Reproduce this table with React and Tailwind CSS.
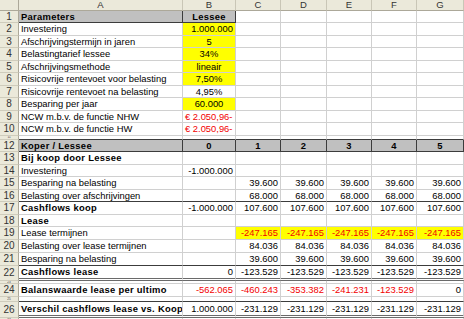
import React from 'react';

const COLS = ['A', 'B', 'C', 'D', 'E', 'F', 'G'];

const GB = 'border-b-[#d0d0d0]';
const GR = 'border-r-[#d0d0d0]';
const DB = 'border-b-[#3c3c3c]';
const DR = 'border-r-[#3c3c3c]';
const Y = 'bg-[#ffff00]';
const RED = 'text-[#f20000]';
const BOLD = 'font-bold tracking-[0.3px]';
const HEAD = 'bg-[#c0c0c0] font-bold tracking-[0.3px]';

// helpers for repeated value cells
const five = (t, extra = {}) => Array.from({ length: 5 }, () => ({ t, a: 'r', ...extra }));
const line = (cells, extra) => cells.map((c) => ({ ...(c || {}), ...extra }));

const ROWS = [
  {
    n: 1, h: 'h-[12px]',
    cells: [
      { t: 'Parameters', c: HEAD, bb: DB, br: DR },
      { t: 'Lessee', a: 'c', c: HEAD, bb: DB, br: DR },
    ],
  },
  { n: 2, h: 'h-[13px]', cells: [{ t: 'Investering' }, { t: '1.000.000', a: 'r', c: Y }] },
  { n: 3, h: 'h-[12px]', cells: [{ t: 'Afschrijvingstermijn in jaren' }, { t: '5', a: 'c', c: Y }] },
  { n: 4, h: 'h-[13px]', cells: [{ t: 'Belastingtarief lessee' }, { t: '34%', a: 'c', c: Y }] },
  { n: 5, h: 'h-[12px]', cells: [{ t: 'Afschrijvingsmethode' }, { t: 'lineair', a: 'c', c: Y }] },
  { n: 6, h: 'h-[13px]', cells: [{ t: 'Risicovrije rentevoet voor belasting' }, { t: '7,50%', a: 'c', c: Y }] },
  { n: 7, h: 'h-[12px]', cells: [{ t: 'Risicovrije rentevoet na belasting' }, { t: '4,95%', a: 'c' }] },
  { n: 8, h: 'h-[13px]', cells: [{ t: 'Besparing per jaar' }, { t: '60.000', a: 'c', c: Y }] },
  { n: 9, h: 'h-[12px]', cells: [{ t: 'NCW m.b.v. de functie NHW' }, { t: '€ 2.050,96-', c: RED }] },
  { n: 10, h: 'h-[13px]', cells: [{ t: 'NCW m.b.v. de functie HW' }, { t: '€ 2.050,96-', c: RED }] },
  { n: 11, h: 'h-[4px]', thin: true, cells: line(Array(7).fill(null), { bb: DB }) },
  {
    n: 12, h: 'h-[12px]',
    cells: line(
      [{ t: 'Koper / Lessee' }, { t: '0', a: 'c' }, { t: '1', a: 'c' }, { t: '2', a: 'c' }, { t: '3', a: 'c' }, { t: '4', a: 'c' }, { t: '5', a: 'c' }],
      { c: HEAD, bb: DB, br: DR }
    ),
  },
  { n: 13, h: 'h-[13px]', cells: [{ t: 'Bij koop door Lessee', c: BOLD }] },
  { n: 14, h: 'h-[12px]', cells: [{ t: 'Investering' }, { t: '-1.000.000', a: 'r' }] },
  { n: 15, h: 'h-[13px]', cells: [{ t: 'Besparing na belasting' }, {}, ...five('39.600')] },
  {
    n: 16, h: 'h-[12px]',
    cells: line([{ t: 'Belasting over afschrijvingen' }, {}, ...five('68.000')], { bb: DB }),
  },
  { n: 17, h: 'h-[13px]', cells: [{ t: 'Cashflows koop', c: BOLD }, { t: '-1.000.000', a: 'r' }, ...five('107.600')] },
  { n: 18, h: 'h-[12px]', cells: [{ t: 'Lease', c: BOLD }] },
  { n: 19, h: 'h-[13px]', cells: [{ t: 'Lease termijnen' }, {}, ...five('-247.165', { c: `${Y} ${RED}` })] },
  { n: 20, h: 'h-[13px]', cells: [{ t: 'Belasting over lease termijnen' }, {}, ...five('84.036')] },
  {
    n: 21, h: 'h-[13px]',
    cells: line([{ t: 'Besparing na belasting' }, {}, ...five('39.600')], { bb: DB }),
  },
  {
    n: 22, h: 'h-[15px]',
    cells: line(
      [{ t: 'Cashflows lease', c: BOLD }, { t: '0', a: 'r' }, ...five('-123.529')],
      { bw: 'border-b-[3px]', bb: 'border-b-[#6a6a6a] border-double' }
    ),
  },
  { n: 23, h: 'h-[3px]', thin: true, cells: [] },
  {
    n: 24, h: 'h-[13px]',
    cells: [
      { t: 'Balanswaarde lease per ultimo', c: BOLD },
      { t: '-562.065', a: 'r', c: RED },
      { t: '-460.243', a: 'r', c: RED },
      { t: '-353.382', a: 'r', c: RED },
      { t: '-241.231', a: 'r', c: RED },
      { t: '-123.529', a: 'r', c: RED },
      { t: '0', a: 'r' },
    ],
  },
  { n: 25, h: 'h-[5px]', thin: true, cells: line(Array(7).fill(null), { bb: DB }) },
  {
    n: 26, h: 'h-[16px]',
    cells: line(
      [{ t: 'Verschil cashflows lease vs. Koop', c: BOLD }, { t: '1.000.000', a: 'r' }, ...five('-231.129')],
      { bw: 'border-b-[3px]', bb: 'border-b-[#6a6a6a] border-double' }
    ),
  },
  { n: 27, h: 'h-[6px]', thin: true, cells: [] },
];

const GRIDCOLS = 'grid grid-cols-[19px_164px_53px_45px_46px_45px_45px_47px]';

function Cell({ cell }) {
  const { t = '', a = 'l', c = '', bb = GB, br = GR, bw = 'border-b' } = cell || {};
  const align = a === 'r' ? 'justify-end' : a === 'c' ? 'justify-center' : 'justify-start';
  return (
    <div className={`flex items-center overflow-hidden whitespace-nowrap px-[2px] border-r ${bw} ${bb} ${br} ${align} ${c}`}>
      {t}
    </div>
  );
}

export default function App() {
  return (
    <div className="w-[464px] h-[319px] overflow-hidden bg-white text-black text-[9.4px] leading-none font-['Liberation_Sans',Arial,sans-serif]">
      <div className={`${GRIDCOLS} h-[11px]`}>
        <div className="bg-[#ebe9da] border-r border-b border-r-[#aca899] border-b-[#aca899]" />
        {COLS.map((c) => (
          <div
            key={c}
            className="flex items-center justify-center bg-[#ebe9da] border-r border-b border-r-[#c9c6b6] border-b-[#aca899] text-[9.5px] text-[#333]"
          >
            {c}
          </div>
        ))}
      </div>
      {ROWS.map((r) => {
        const cells = [...r.cells];
        while (cells.length < 7) cells.push({});
        return (
          <div key={r.n} className={`${GRIDCOLS} ${r.h}`}>
            <div
              className={`flex items-center justify-center overflow-hidden bg-[#ebe9da] border-r border-b border-r-[#aca899] border-b-[#cfccbc] text-[#333] ${
                r.thin ? 'text-[3px] leading-[3px]' : 'text-[10px]'
              }`}
            >
              {r.n}
            </div>
            {cells.map((cell, i) => (
              <Cell key={i} cell={cell} />
            ))}
          </div>
        );
      })}
    </div>
  );
}
